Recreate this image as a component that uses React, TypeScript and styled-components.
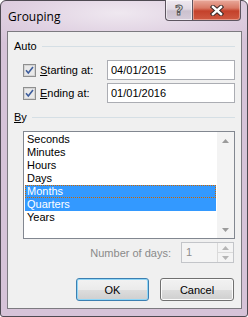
import React from 'react';
import styled, { createGlobalStyle, css } from 'styled-components';

const GlobalStyle = createGlobalStyle`
  html, body {
    margin: 0;
    padding: 0;
    background: #ffffff;
  }
  body {
    font-family: "Liberation Sans", Arial, sans-serif;
    font-size: 11px;
    color: #000;
  }
`;

const Frame = styled.div`
  box-sizing: border-box;
  width: 248px;
  height: 317px;
  display: flex;
  flex-direction: column;
  padding: 0 5px 7px 6px;
  border: 1px solid #4e4a52;
  border-radius: 6px 6px 3px 3px;
  background: radial-gradient(ellipse 70% 40px at 48% 12px, #efe8f0 0%, #dfd0e1 60%, #d6c3d8 100%),
    #d6c3d8;
  background-color: #d6c3d8;
`;

const TitleBar = styled.header`
  flex: 0 0 30px;
  display: flex;
  justify-content: space-between;
  align-items: flex-start;
`;

const Title = styled.h1`
  margin: 8px 0 0 1px;
  font-family: "Open Sans", "Liberation Sans", sans-serif;
  font-size: 12px;
  font-weight: 400;
  line-height: 16px;
  color: #000;
`;

const CaptionButtons = styled.div`
  display: flex;
  margin-top: -1px;
  margin-right: 1px;
`;

const captionBase = css`
  box-sizing: border-box;
  height: 21px;
  display: flex;
  align-items: center;
  justify-content: center;
  border: 1px solid #5d5560;
  border-top: none;
`;

const HelpButton = styled.div`
  ${captionBase}
  width: 27px;
  border-right: none;
  border-radius: 0 0 0 4px;
  background: linear-gradient(#efe9f0 0%, #e1d9e3 45%, #cbc1ce 55%, #d6ccd9 100%);
  box-shadow: inset 0 0 0 1px rgba(255, 255, 255, 0.55);
  font-family: "DejaVu Sans", sans-serif;
  font-weight: 700;
  font-size: 14px;
  color: #e4e4e4;
  -webkit-text-stroke: 1px #5a5a5a;
`;

const CloseButton = styled.div`
  ${captionBase}
  width: 49px;
  border-radius: 0 0 4px 0;
  background: linear-gradient(#e9aa9c 0%, #d97a66 40%, #c4412b 55%, #cf5a42 100%);
  box-shadow: inset 0 0 0 1px rgba(255, 220, 210, 0.45);
`;

const Client = styled.main`
  flex: 1;
  box-sizing: border-box;
  display: flex;
  flex-direction: column;
  padding: 8px 6px 7px 6px;
  background: #f0f0f0;
  border: 1px solid #7c7a80;
`;

const GroupHeader = styled.div<{ $top?: number }>`
  height: 13px;
  display: flex;
  align-items: center;
  gap: 5px;
  margin-top: ${p => p.$top ?? 0}px;
  line-height: 13px;

  &::after {
    content: '';
    flex: 1;
    height: 1px;
    background: #d5dfe5;
  }
`;

const Key = styled.span`
  text-decoration: underline;
  text-underline-offset: 1px;
`;

const Row = styled.div<{ $top: number }>`
  height: 20px;
  margin: ${p => p.$top}px 0 0 9px;
  display: flex;
  align-items: center;
`;

const CheckLabel = styled.label`
  width: 67px;
  margin-left: 4px;
`;

const TextBox = styled.input`
  flex: 1;
  min-width: 0;
  box-sizing: border-box;
  height: 20px;
  margin: 0;
  padding: 0 0 0 3px;
  border: 1px solid #abadb3;
  background: #fff;
  font-family: inherit;
  font-size: 11px;
  color: #000;
  outline: none;
`;

const List = styled.div`
  height: 108px;
  box-sizing: border-box;
  margin: 7px 0 0 9px;
  display: flex;
  border: 1px solid #828790;
  background: #fff;
`;

const Items = styled.div`
  flex: 1;
  padding: 1px;
`;

const Item = styled.div<{ $selected?: boolean; $focused?: boolean }>`
  height: 13px;
  line-height: 13px;
  padding-left: 2px;
  background: ${p => (p.$selected ? '#3399ff' : 'transparent')};
  color: ${p => (p.$selected ? '#fff' : '#000')};
  ${p =>
    p.$focused &&
    css`
      outline: 1px dotted #cc6600;
      outline-offset: -1px;
    `}
`;

const ScrollBar = styled.div`
  width: 17px;
  display: flex;
  flex-direction: column;
  justify-content: space-between;
  background: #f3f3f3;
`;

const ScrollArrow = styled.div`
  height: 17px;
  display: flex;
  align-items: center;
  justify-content: center;
`;

const SpinRow = styled.div`
  height: 21px;
  margin-top: 3px;
  display: flex;
  justify-content: flex-end;
  align-items: center;
  gap: 10px;
  padding-right: 1px;
  color: #8a8a8a;
`;

const SpinBox = styled.div`
  box-sizing: border-box;
  width: 53px;
  height: 21px;
  display: flex;
  border: 1px solid #c3c5c9;
  background: #f4f4f4;
`;

const SpinValue = styled.div`
  flex: 1;
  padding-left: 4px;
  line-height: 19px;
  color: #8d8d8d;
`;

const SpinButtons = styled.div`
  width: 15px;
  display: flex;
  flex-direction: column;
  border-left: 1px solid #dadada;
`;

const SpinHalf = styled.div`
  flex: 1;
  display: flex;
  align-items: center;
  justify-content: center;
  & + & {
    border-top: 1px solid #dadada;
  }
`;

const ButtonRow = styled.div`
  margin-top: 15px;
  display: flex;
  justify-content: flex-end;
  gap: 11px;
  padding-right: 1px;
`;

const Button = styled.button<{ $default?: boolean; $width: number }>`
  box-sizing: border-box;
  width: ${p => p.$width}px;
  height: 23px;
  margin: 0;
  padding: 0;
  border: 1px solid ${p => (p.$default ? '#3c7fb1' : '#707070')};
  border-radius: 3px;
  background: linear-gradient(#f2f2f2 0%, #ebebeb 50%, #dddddd 51%, #cfcfcf 100%);
  box-shadow: inset 0 0 0 1px ${p => (p.$default ? '#8fd6f7' : '#fbfbfb')};
  font-family: inherit;
  font-size: 11px;
  color: #000;
`;

const CheckBox = () => (
  <svg width="13" height="13" viewBox="0 0 13 13">
    <rect x="0.5" y="0.5" width="12" height="12" fill="#f4f4f4" stroke="#8e8f8f" />
    <rect x="1.5" y="1.5" width="10" height="10" fill="#e9e9e9" stroke="#d4d4d4" />
    <path d="M3 6.3 L5.3 9 L10 3" fill="none" stroke="#3d5d9c" strokeWidth="1.6" />
  </svg>
);

const Arrow = ({ down, color = '#9b9b9b' }: { down?: boolean; color?: string }) => (
  <svg width="7" height="4" viewBox="0 0 7 4">
    <polygon points={down ? '0,0 7,0 3.5,4' : '3.5,0 7,4 0,4'} fill={color} />
  </svg>
);

const CloseGlyph = () => (
  <svg width="14" height="11" viewBox="0 0 14 11">
    <path d="M3 2 L11 9 M11 2 L3 9" stroke="#3b2a28" strokeWidth="4.4" strokeLinecap="square" />
    <path d="M3 2 L11 9 M11 2 L3 9" stroke="#ffffff" strokeWidth="2.4" strokeLinecap="square" />
  </svg>
);

const units = ['Seconds', 'Minutes', 'Hours', 'Days', 'Months', 'Quarters', 'Years'];
const selected = ['Months', 'Quarters'];

export default function App() {
  return (
    <>
      <GlobalStyle />
      <Frame>
        <TitleBar>
          <Title>Grouping</Title>
          <CaptionButtons>
            <HelpButton>?</HelpButton>
            <CloseButton>
              <CloseGlyph />
            </CloseButton>
          </CaptionButtons>
        </TitleBar>

        <Client>
          <GroupHeader>Auto</GroupHeader>
          <Row $top={7}>
            <CheckBox />
            <CheckLabel>
              <Key>S</Key>tarting at:
            </CheckLabel>
            <TextBox readOnly value="04/01/2015" />
          </Row>
          <Row $top={3}>
            <CheckBox />
            <CheckLabel>
              <Key>E</Key>nding at:
            </CheckLabel>
            <TextBox readOnly value="01/01/2016" />
          </Row>

          <GroupHeader $top={8}>
            <span>
              <Key>B</Key>y
            </span>
          </GroupHeader>
          <List>
            <Items>
              {units.map(u => (
                <Item key={u} $selected={selected.includes(u)} $focused={u === 'Months'}>
                  {u}
                </Item>
              ))}
            </Items>
            <ScrollBar>
              <ScrollArrow>
                <Arrow />
              </ScrollArrow>
              <ScrollArrow>
                <Arrow down />
              </ScrollArrow>
            </ScrollBar>
          </List>

          <SpinRow>
            <span>Number of days:</span>
            <SpinBox>
              <SpinValue>1</SpinValue>
              <SpinButtons>
                <SpinHalf>
                  <Arrow color="#b5b5b5" />
                </SpinHalf>
                <SpinHalf>
                  <Arrow down color="#b5b5b5" />
                </SpinHalf>
              </SpinButtons>
            </SpinBox>
          </SpinRow>

          <ButtonRow>
            <Button $default $width={73}>OK</Button>
            <Button $width={74}>Cancel</Button>
          </ButtonRow>
        </Client>
      </Frame>
    </>
  );
}
